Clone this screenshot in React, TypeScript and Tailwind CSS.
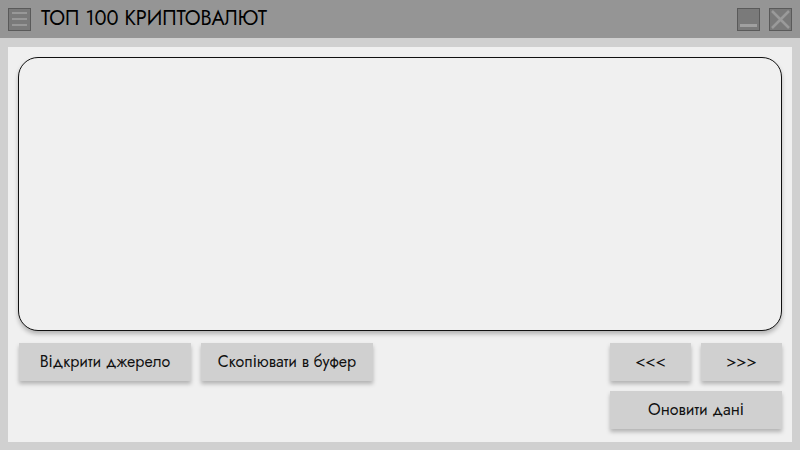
import React from "react";

const font = { fontFamily: '"Jost", "Futura", "Noto Sans", "DejaVu Sans", sans-serif' };

function Btn({ label, className = "" }: { label: string; className?: string }) {
  return (
    <button
      className={`h-[38px] bg-[#d0d0d0] text-[16px] text-[#111] shadow-[0_3px_4px_rgba(0,0,0,0.25)] ${className}`}
      style={font}
    >
      {label}
    </button>
  );
}

export default function App() {
  return (
    <div className="w-[800px] h-[450px] bg-[#d0d0d0] flex flex-col overflow-hidden" style={font}>
      <div className="h-[38px] bg-[#959595] flex items-center px-2 shrink-0">
        <div className="w-[23px] h-[23px] bg-[#7a7a7a] border border-[#5a5a5a] flex flex-col justify-center items-center gap-[4px]">
          <div className="w-[15px] h-[2px] bg-[#989898]" />
          <div className="w-[15px] h-[2px] bg-[#989898]" />
          <div className="w-[15px] h-[2px] bg-[#989898]" />
        </div>
        <div className="ml-[10px] text-[20px] text-black">ТОП 100 КРИПТОВАЛЮТ</div>
        <div className="ml-auto flex gap-[9px]">
          <div className="w-[23px] h-[23px] bg-[#7a7a7a] border border-[#5a5a5a] flex items-end justify-center pb-[3px]">
            <div className="w-[17px] h-[3px] bg-[#a0a0a0]" />
          </div>
          <div className="w-[23px] h-[23px] bg-[#7a7a7a] border border-[#5a5a5a] flex items-center justify-center">
            <svg width="21" height="21" viewBox="0 0 21 21">
              <path d="M2 2 L19 19 M19 2 L2 19" stroke="#9a9a9a" strokeWidth="2.5" />
            </svg>
          </div>
        </div>
      </div>
      <div className="flex-1 mx-2 mt-[9px] mb-[8px] bg-[#f0f0f0] px-[10px] pt-[10px] flex flex-col">
        <div className="h-[274px] rounded-[20px] border-[1.5px] border-[#111] bg-[#f0f0f0] shadow-[0_3px_4px_rgba(0,0,0,0.25)]" />
        <div className="flex mt-[12px]">
          <div className="flex gap-[10px] ml-[1px]">
            <Btn label="Відкрити джерело" className="w-[172px]" />
            <Btn label="Скопіювати в буфер" className="w-[172px]" />
          </div>
          <div className="ml-auto flex flex-col gap-[10px]">
            <div className="flex gap-[10px]">
              <Btn label="<<<" className="w-[81px]" />
              <Btn label=">>>" className="w-[81px]" />
            </div>
            <Btn label="Оновити дані" className="w-[172px]" />
          </div>
        </div>
      </div>
    </div>
  );
}
